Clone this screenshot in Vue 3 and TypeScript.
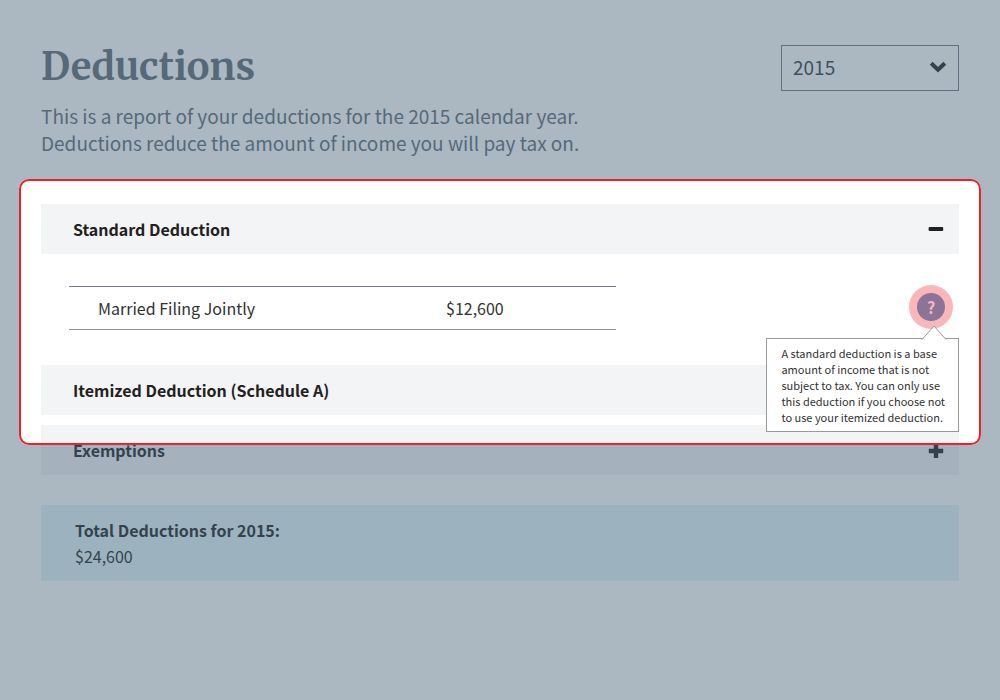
<script setup lang="ts">
import { computed, ref } from 'vue'

const year = ref('2015')
const years = ['2015', '2014', '2013']
const standardOpen = ref(true)
const deduction = { label: 'Married Filing Jointly', amount: '$12,600' }
const total = '$24,600'
const reportLine = computed(() => `This is a report of your deductions for the ${year.value} calendar year.`)
</script>

<template>
  <main class="page">
    <header class="intro">
      <div>
        <h1>Deductions</h1>
        <p>{{ reportLine }}<br />Deductions reduce the amount of income you will pay tax on.</p>
      </div>
      <div class="picker">
        <select v-model="year" aria-label="Calendar year">
          <option v-for="y in years" :key="y" :value="y">{{ y }}</option>
        </select>
        <svg class="chevron" viewBox="0 0 18 12" aria-hidden="true">
          <path d="M2.2 2.2 9 8.8 15.8 2.2" />
        </svg>
      </div>
    </header>

    <section class="accordion">
      <button class="bar" type="button" :aria-expanded="standardOpen" @click="standardOpen = !standardOpen">
        <span>Standard Deduction</span>
        <svg class="sign" viewBox="0 0 16 16" aria-hidden="true">
          <rect x="0.6" y="6" width="14.6" height="4" rx="1" />
        </svg>
      </button>
      <div v-show="standardOpen" class="panel">
        <table>
          <tbody>
            <tr>
              <th scope="row">{{ deduction.label }}</th>
              <td>{{ deduction.amount }}</td>
            </tr>
          </tbody>
        </table>
        <div class="help">
          <button class="help-button" type="button" aria-label="Help" aria-describedby="deduction-tip">
            <span>?</span>
          </button>
          <div id="deduction-tip" class="tip" role="tooltip">
            <svg class="pointer" viewBox="0 0 26 15" aria-hidden="true">
              <path d="M1 14.5 13 1 25 14.5" />
            </svg>
            A standard deduction is a base<br />
            amount of income that is not<br />
            subject to tax. You can only use<br />
            this deduction if you choose not<br />
            to use your itemized deduction.
          </div>
        </div>
      </div>
      <button class="bar" type="button" aria-expanded="false">
        <span>Itemized Deduction (Schedule A)</span>
      </button>
      <button class="bar last" type="button" aria-expanded="false">
        <span>Exemptions</span>
        <svg class="sign" viewBox="0 0 16 16" aria-hidden="true">
          <path d="M5.8 2h4.4v4.8h5v4.4h-5V16H5.8v-4.8h-5V6.8h5z" />
        </svg>
      </button>
      <div class="spotlight" aria-hidden="true"></div>
    </section>

    <section class="total">
      <h2>Total Deductions for {{ year }}:</h2>
      <p>{{ total }}</p>
    </section>
  </main>
</template>

<style>
body {
  margin: 0;
  background: #ffffff;
}
</style>

<style scoped>
.page {
  box-sizing: border-box;
  min-height: 100vh;
  padding: 40px 41px 48px;
  overflow: hidden;
  background: #ffffff;
  color: #212121;
  font-family: "Source Sans Pro", "Noto Sans CJK SC", "Noto Sans", sans-serif;
  font-size: 16px;
}

.intro {
  display: flex;
  justify-content: space-between;
  align-items: flex-start;
  color: #5e6b75;
}

h1 {
  margin: 0 0 8px;
  font-family: "Merriweather", "Liberation Serif", serif;
  font-size: 38px;
  font-weight: 700;
  line-height: 54px;
}

.intro p {
  margin: 0;
  font-size: 19px;
  line-height: 27px;
}

.picker {
  position: relative;
  margin-top: 5px;
}

select {
  display: block;
  box-sizing: border-box;
  width: 178px;
  height: 46px;
  padding: 0 40px 4px 11px;
  border: 1px solid #6e7a86;
  border-radius: 0;
  appearance: none;
  background: transparent;
  color: #323a42;
  font-family: inherit;
  font-size: 19px;
}

.chevron {
  position: absolute;
  top: 16px;
  right: 12px;
  width: 18px;
  height: 12px;
  fill: none;
  stroke: #212121;
  stroke-width: 4;
  pointer-events: none;
}

.accordion {
  position: relative;
  margin-top: 48px;
}

.bar {
  display: flex;
  justify-content: space-between;
  align-items: center;
  box-sizing: border-box;
  width: 100%;
  min-height: 50px;
  padding: 0 15px 0 32px;
  border: 0;
  background: #f3f4f6;
  color: #212121;
  font-family: inherit;
  font-size: 16px;
  font-weight: 700;
  line-height: 24px;
  text-align: left;
}

.last {
  margin-top: 10px;
}

.sign {
  width: 16px;
  height: 16px;
  fill: #212121;
}

.panel {
  display: flex;
  justify-content: space-between;
  align-items: flex-start;
  padding: 31px 6px 35px 28px;
}

table {
  flex: 0 1 547px;
  display: table;
  width: 547px;
  margin-top: 1px;
  border-collapse: separate;
  border-spacing: 0;
  border-top: 1px solid #72788a;
  border-bottom: 1px solid #8e8e9a;
  color: #323232;
}

th,
td {
  height: 42px;
  padding: 0;
  font-weight: 400;
  line-height: 24px;
  text-align: left;
  vertical-align: middle;
}

th {
  width: 348px;
  padding-left: 29px;
}

.help {
  position: relative;
  z-index: 2;
}

.help-button {
  display: flex;
  align-items: center;
  justify-content: center;
  width: 44px;
  height: 44px;
  padding: 0;
  border: 0;
  border-radius: 50%;
  background: #fab7b9;
  font-family: inherit;
}

.help-button span {
  width: 28px;
  border-radius: 50%;
  background: #8c7499;
  color: #fab7b9;
  font-size: 16px;
  font-weight: 700;
  line-height: 28px;
}

.tip {
  position: absolute;
  top: 53px;
  right: -6px;
  padding: 6px 13px 6px 14px;
  border: 1px solid #999999;
  background: #ffffff;
  color: #323232;
  font-size: 11px;
  line-height: 16px;
  white-space: nowrap;
}

.pointer {
  position: absolute;
  top: -14px;
  right: 11px;
  width: 26px;
  height: 15px;
  fill: #ffffff;
  stroke: #999999;
}

.spotlight {
  position: absolute;
  z-index: 1;
  top: -25px;
  right: -22px;
  bottom: 30px;
  left: -22px;
  border: 2px solid #ee2127;
  border-radius: 10px;
  box-shadow: 0 0 0 2000px rgba(76, 104, 125, 0.47);
  pointer-events: none;
}

.total {
  margin-top: 30px;
  padding: 12px 34px;
  background: #e2f5f9;
}

.total h2,
.total p {
  margin: 0;
  font-size: 16px;
  line-height: 26px;
}
</style>
